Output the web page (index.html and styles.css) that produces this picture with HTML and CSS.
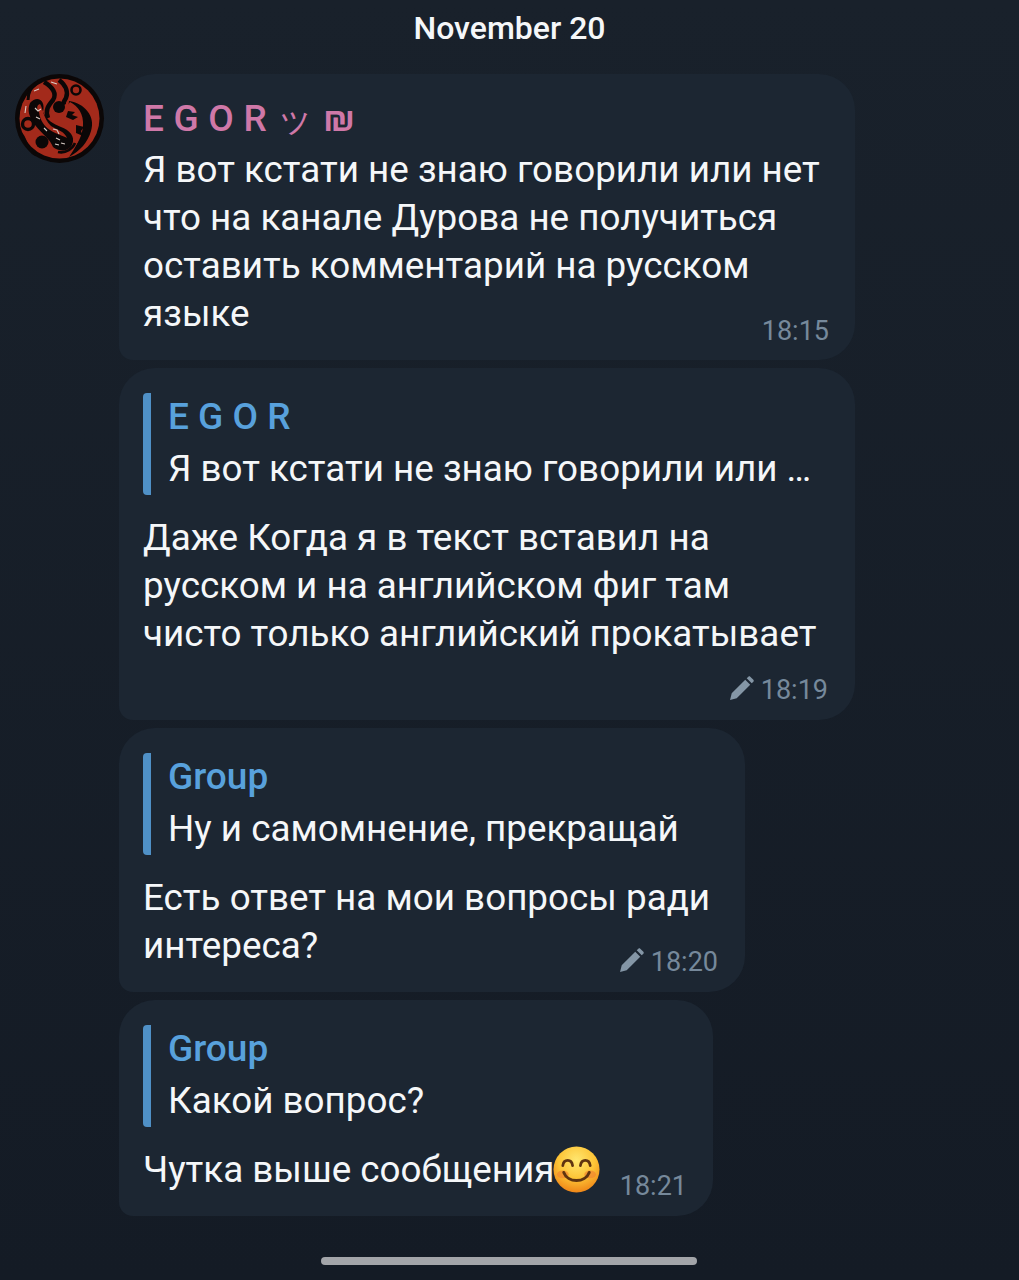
FILE: index.html
```html
<!DOCTYPE html>
<html lang="ru">
<head>
<meta charset="utf-8">
<title>Chat</title>
<link rel="stylesheet" href="styles.css">
</head>
<body>
<main class="screen">
  <div class="date">November 20</div>
  <div class="chat">
    <div class="avatar">
      <svg viewBox="5 4 90 90" width="90" height="90">
        <circle cx="49.5" cy="48.5" r="44.5" fill="#0b0707"/>
        <circle cx="49.5" cy="48.5" r="40" fill="#a32a1b"/>
        <path d="M20 33C27 25 36 30 33 42C37 50 43 54 51 57C59 60 66 66 62 75C57 83 48 81 43 77C40 69 33 65 25 55C19 47 17 40 20 33z" fill="#0b0707"/>
        <path d="M34 12C43 17 47 24 43 30C38 36 35 40 38 48" stroke="#0b0707" stroke-width="4.5" fill="none"/>
        <path d="M49 10C57 16 58 23 56 28C54 31 53 33 54 35" stroke="#0b0707" stroke-width="4.5" fill="none"/>
        <path d="M28 12C22 16 18 22 18 30" stroke="#0b0707" stroke-width="3" fill="none"/>
        <path d="M29 42C26 38 27 35 30 34C33 38 33 48 41 56C48 60 55 62 57 68C54 66 46 64 40 60C34 56 30 50 29 42z" fill="#a32a1b"/>
        <path d="M59 31C74 33 86 46 81 61C78 72 70 81 59 87C65 78 70 70 70 60C70 50 65 43 58 40z" fill="#0b0707"/>
        <path d="M60 32C68 36 74 44 73 56C72 66 68 74 62 80C64 70 65 62 63 54C61 46 57 42 54 40z" fill="#a32a1b"/>
        <path d="M58 41l7 1-3 3 6 2-5 3-7-3zM66 55l8 2-3 4 2 5-7-3z" fill="#0b0707"/>
        <circle cx="49" cy="37" r="6" fill="#0b0707"/>
        <circle cx="66" cy="20" r="4.5" fill="none" stroke="#0b0707" stroke-width="2.6"/>
        <circle cx="18" cy="54" r="5.5" fill="none" stroke="#0b0707" stroke-width="3.4"/>
        <circle cx="32" cy="72" r="6.5" fill="#0b0707"/>
        <path d="M11 63C17 70 16 80 26 85M48 82C56 84 63 78 65 73" stroke="#0b0707" stroke-width="2.6" fill="none"/>
        <path d="M25 38l3 3 3-2M26 47l4 2M34 58l3 3M43 59l4 1 2 4M46 68l4 2M45 74l4 1M51 73l4 1M16 36l-1 7M24 21l5-2M41 12l6 2" stroke="#d8ccc6" stroke-width="1.1" fill="none"/>
      </svg>
    </div>
    <div class="messages">
      <article class="bubble bubble-first">
        <h2 class="sender sender-pink">E G O R ッ ₪</h2>
        <p class="text">Я вот кстати не знаю говорили или нет<br>что на канале Дурова не получиться<br>оставить комментарий на русском<br>языке</p>
        <span class="meta meta-plain"><time>18:15</time></span>
      </article>
      <article class="bubble bubble-second">
        <blockquote class="reply">
          <div class="reply-name">E G O R</div>
          <div class="reply-text">Я вот кстати не знаю говорили или …</div>
        </blockquote>
        <p class="text">Даже Когда я в текст вставил на<br>русском и на английском фиг там<br>чисто только английский прокатывает</p>
        <span class="meta meta-edited">
          <svg class="pencil" viewBox="0 0 24 24" width="25" height="25"><path d="M1 23l1.6-6.4L15.6 3.6l4.8 4.8L7.4 21.4zM17 2.2l1.6-1.6c.6-.5 1.3-.5 1.8 0l3 3c.5.5.5 1.2 0 1.8L21.8 7z" fill="currentColor"/></svg>
          <time>18:19</time>
        </span>
      </article>
      <article class="bubble bubble-third">
        <blockquote class="reply">
          <div class="reply-name">Group</div>
          <div class="reply-text">Ну и самомнение, прекращай</div>
        </blockquote>
        <p class="text">Есть ответ на мои вопросы ради<br>интереса?</p>
        <span class="meta meta-edited">
          <svg class="pencil" viewBox="0 0 24 24" width="25" height="25"><path d="M1 23l1.6-6.4L15.6 3.6l4.8 4.8L7.4 21.4zM17 2.2l1.6-1.6c.6-.5 1.3-.5 1.8 0l3 3c.5.5.5 1.2 0 1.8L21.8 7z" fill="currentColor"/></svg>
          <time>18:20</time>
        </span>
      </article>
      <article class="bubble bubble-fourth">
        <blockquote class="reply">
          <div class="reply-name">Group</div>
          <div class="reply-text">Какой вопрос?</div>
        </blockquote>
        <p class="text text-emoji">Чутка выше сообщения<svg class="emoji" viewBox="0 0 48 48" width="47" height="47">
          <defs><radialGradient id="face" cx="50%" cy="30%" r="72%"><stop offset="0" stop-color="#ffe770"/><stop offset=".55" stop-color="#fdc436"/><stop offset="1" stop-color="#ee8216"/></radialGradient></defs>
          <circle cx="24" cy="24" r="23.5" fill="url(#face)"/>
          <ellipse cx="10" cy="29" rx="6" ry="4" fill="#f28a30" opacity=".75"/>
          <ellipse cx="38" cy="29" rx="6" ry="4" fill="#f28a30" opacity=".75"/>
          <path d="M10 20c1-7 9-7 10 0M28 20c1-7 9-7 10 0" stroke="#5f3410" stroke-width="2.8" fill="none" stroke-linecap="round"/>
          <path d="M11 27c4 11 22 11 26 0" stroke="#5f3410" stroke-width="3" fill="none" stroke-linecap="round"/>
        </svg></p>
        <span class="meta"><time>18:21</time></span>
      </article>
    </div>
  </div>
  <div class="home-bar"></div>
</main>
</body>
</html>
```
FILE: styles.css
```css
* { box-sizing: border-box; }
html, body { margin: 0; padding: 0; }
body {
  background: #161d27;
  font-family: Roboto, "Noto Sans", sans-serif;
  color: #f5f7f9;
}
.screen {
  height: 1280px;
  overflow: hidden;
  display: flex;
  flex-direction: column;
  background: linear-gradient(#19212b, #141b25);
}
.date {
  height: 74px;
  padding-top: 9px;
  text-align: center;
  font-size: 32px;
  line-height: 38px;
  font-weight: 500;
  color: #f5f7f9;
}
.chat {
  display: flex;
  align-items: flex-start;
  padding-left: 15px;
  gap: 14px;
}
.avatar { width: 90px; height: 90px; flex: none; }
.avatar svg { display: block; }
.messages {
  display: flex;
  flex-direction: column;
  align-items: flex-start;
  gap: 8px;
}
.bubble {
  position: relative;
  background: #1c2632;
  border-radius: 36px 36px 36px 14px;
  padding: 20px 24px 0;
}
.bubble-first { width: 736px; height: 286px; }
.bubble-second { width: 736px; height: 352px; }
.bubble-third { width: 626px; height: 264px; }
.bubble-fourth { width: 594px; height: 216px; }
.sender {
  margin: 1px 0 3px;
  font-size: 37px;
  line-height: 48px;
  font-weight: 500;
  letter-spacing: 0.2px;
  white-space: nowrap;
}
.sender-pink { color: #cf78a8; }
.text {
  margin: 0;
  font-size: 36.8px;
  line-height: 48px;
  white-space: nowrap;
}
.text-emoji { display: flex; align-items: center; }
.reply {
  margin: 5px 0 19px;
  height: 102px;
  border-left: 8px solid #4f90c6;
  border-radius: 4px;
  padding-left: 17px;
}
.reply-name {
  font-size: 37px;
  line-height: 47px;
  font-weight: 500;
  color: #58a1dc;
}
.reply-text {
  font-size: 36.8px;
  line-height: 58px;
  white-space: nowrap;
}
.meta {
  position: absolute;
  right: 26px;
  bottom: 14px;
  display: flex;
  align-items: center;
  gap: 7px;
  font-size: 27px;
  line-height: 32px;
  color: #76899b;
}
.meta-plain { bottom: 13px; }
.meta-edited { right: 27px; }
.pencil { color: #8496a6; margin-top: -4px; }
.emoji { display: block; margin: -1px 0 0 -1px; flex: none; }
.home-bar {
  width: 376px;
  height: 8px;
  margin: auto auto 15px;
  border-radius: 4px;
  background: #a3a5a9;
  transform: translateX(-1px);
}
```
